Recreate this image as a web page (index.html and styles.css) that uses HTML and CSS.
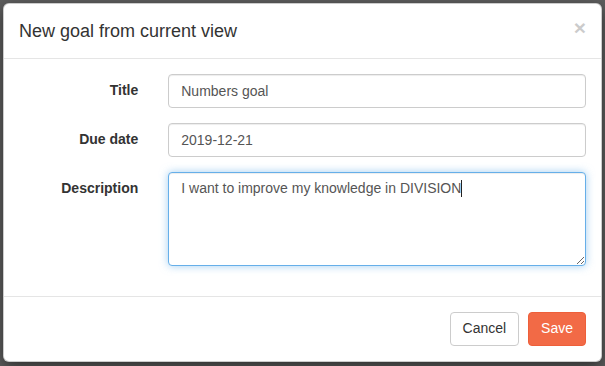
FILE: index.html
```html
<!DOCTYPE html>
<html lang="en">
<head>
  <meta charset="UTF-8" />
  <title>New goal</title>
  <link rel="stylesheet" href="styles.css">
</head>
<body>
  <div class="modal-content">
    <div class="modal-header">
      <button type="button" class="close">&times;</button>
      <h4 class="modal-title">New goal from current view</h4>
    </div>
    <div class="modal-body">
      <form class="form-horizontal">
        <div class="form-group">
          <label class="control-label">Title</label>
          <div class="field"><input class="form-control" type="text" value="Numbers goal"></div>
        </div>
        <div class="form-group">
          <label class="control-label">Due date</label>
          <div class="field"><input class="form-control" type="text" value="2019-12-21"></div>
        </div>
        <div class="form-group">
          <label class="control-label">Description</label>
          <div class="field caret-wrap">
            <textarea class="form-control focused" rows="4">I want to improve my knowledge in DIVISION</textarea>
            <span class="caret-mark"></span>
          </div>
        </div>
      </form>
    </div>
    <div class="modal-footer">
      <button type="button" class="btn btn-default">Cancel</button>
      <button type="button" class="btn btn-save">Save</button>
    </div>
  </div>
</body>
</html>
```
FILE: styles.css
```css
* {
  box-sizing: border-box;
}
body {
  margin: 0;
  padding: 3px 3px 4px 3px;
  background: #5e5e5e;
  font-family: "Liberation Sans", Arial, sans-serif;
  font-size: 14px;
  line-height: 1.42857;
  color: #333;
}
.modal-content {
  background: #fff;
  border: 1px solid rgba(0, 0, 0, 0.2);
  border-radius: 6px;
  box-shadow: 0 5px 15px rgba(0, 0, 0, 0.5);
}
.modal-header {
  padding: 15px;
  border-bottom: 1px solid #e5e5e5;
}
.modal-title {
  margin: 0;
  font-size: 18px;
  font-weight: 500;
  line-height: 24px;
}
.close {
  float: right;
  margin-top: -2px;
  padding: 0;
  border: 0;
  background: transparent;
  font-family: "Liberation Sans", Arial, sans-serif;
  font-size: 21px;
  font-weight: bold;
  line-height: 1;
  color: #000;
  opacity: 0.2;
  cursor: pointer;
}
.modal-body {
  padding: 15px;
}
.form-horizontal {
  margin: 0 -15px;
}
.form-group {
  display: grid;
  grid-template-columns: 25% 75%;
  margin-bottom: 15px;
}
.control-label {
  padding: 7px 15px 0;
  text-align: right;
  font-weight: bold;
}
.field {
  padding: 0 15px;
}
.caret-wrap {
  position: relative;
}
.form-control {
  display: block;
  width: 100%;
  height: 34px;
  padding: 6px 12px;
  font-family: inherit;
  font-size: 14px;
  line-height: 1.42857;
  color: #555;
  background: #fff;
  border: 1px solid #ccc;
  border-radius: 4px;
  box-shadow: inset 0 1px 1px rgba(0, 0, 0, 0.075);
  margin: 0;
}
textarea.form-control {
  height: auto;
  resize: vertical;
}
.form-control.focused {
  border-color: #66afe9;
  outline: 0;
  box-shadow: inset 0 1px 1px rgba(0, 0, 0, 0.075), 0 0 8px rgba(102, 175, 233, 0.6);
}
.caret-mark {
  position: absolute;
  left: 308px;
  top: 8px;
  width: 1px;
  height: 17px;
  background: #222;
}
.modal-footer {
  padding: 15px;
  text-align: right;
  border-top: 1px solid #e5e5e5;
}
.btn {
  display: inline-block;
  height: 34px;
  padding: 6px 12px;
  font-family: inherit;
  font-size: 14px;
  line-height: 1.42857;
  border: 1px solid transparent;
  border-radius: 4px;
  cursor: pointer;
}
.btn + .btn {
  margin-left: 5px;
}
.btn-default {
  color: #333;
  background: #fff;
  border-color: #ccc;
}
.btn-save {
  color: #fff;
  background: #f26a46;
  border-color: #ee5f3a;
}
```
